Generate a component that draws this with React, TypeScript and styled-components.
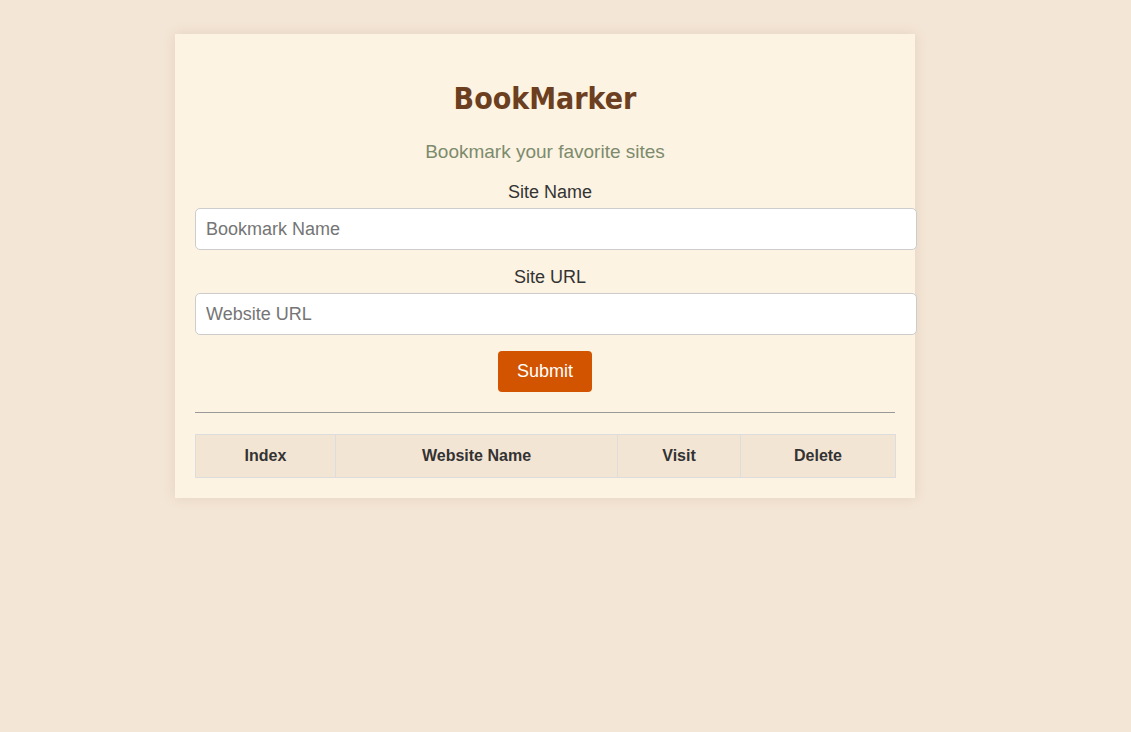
import React from "react";
import styled, { createGlobalStyle } from "styled-components";

const Global = createGlobalStyle`
  * { box-sizing: content-box; }
  html, body { margin: 0; padding: 0; }
  body {
    background: #f4e6d6;
    font-family: "Liberation Sans", Arial, sans-serif;
    color: #333;
  }
`;

const Page = styled.div`
  padding-top: 34px;
  padding-left: 175px;
  min-height: 698px;
`;

const Card = styled.div`
  display: flex;
  flex-direction: column;
  width: 700px;
  padding: 20px;
  background: #fdf3e3;
  box-shadow: 0 0 12px rgba(120, 90, 60, 0.15);
`;

const Title = styled.h1`
  margin: 26px 0 0;
  font-family: "Comic Sans MS", "DejaVu Sans", sans-serif;
  font-stretch: condensed;
  font-size: 30px;
  font-weight: bold;
  line-height: 37px;
  color: #6b3f20;
  text-align: center;
`;

const Subtitle = styled.p`
  margin: 24px 0 2px;
  font-size: 19px;
  line-height: 22px;
  color: #7c8b6c;
  text-align: center;
`;

const Label = styled.label`
  display: block;
  margin: 17px 0 6px;
  padding-left: 10px;
  font-size: 18px;
  line-height: 20px;
  color: #333;
  text-align: center;
`;

const Input = styled.input`
  display: block;
  width: 100%;
  height: 40px;
  padding: 0 10px;
  margin: 0;
  border: 1px solid #ccc;
  border-radius: 5px;
  background: #fff;
  font-family: "Liberation Sans", Arial, sans-serif;
  font-size: 18px;
  color: #333;
  outline: none;
  &::placeholder { color: #757575; }
`;

const ButtonRow = styled.div`
  display: flex;
  justify-content: center;
  margin-top: 16px;
`;

const Button = styled.button`
  width: 94px;
  height: 41px;
  padding: 0;
  border: none;
  border-radius: 4px;
  background: #d35400;
  color: #fff;
  font-family: "Liberation Sans", Arial, sans-serif;
  font-size: 18px;
  cursor: pointer;
`;

const Rule = styled.hr`
  width: 100%;
  margin: 20px 0 21px;
  border: none;
  border-top: 1px solid #999;
  height: 0;
`;

const Table = styled.table`
  width: 100%;
  border-collapse: collapse;
`;

const Th = styled.th<{ $w: number }>`
  width: ${(p) => p.$w}px;
  height: 42px;
  padding: 0;
  background: #f3e5d4;
  border: 1px solid #ddd;
  font-size: 16px;
  font-weight: bold;
  color: #333;
  text-align: center;
`;

export default function App() {
  return (
    <>
      <Global />
      <Page>
        <Card>
          <Title>BookMarker</Title>
          <Subtitle>Bookmark your favorite sites</Subtitle>
          <Label>Site Name</Label>
          <Input placeholder="Bookmark Name" />
          <Label>Site URL</Label>
          <Input placeholder="Website URL" />
          <ButtonRow>
            <Button>Submit</Button>
          </ButtonRow>
          <Rule />
          <Table>
            <thead>
              <tr>
                <Th $w={139}>Index</Th>
                <Th $w={281}>Website Name</Th>
                <Th $w={122}>Visit</Th>
                <Th $w={154}>Delete</Th>
              </tr>
            </thead>
          </Table>
        </Card>
      </Page>
    </>
  );
}
